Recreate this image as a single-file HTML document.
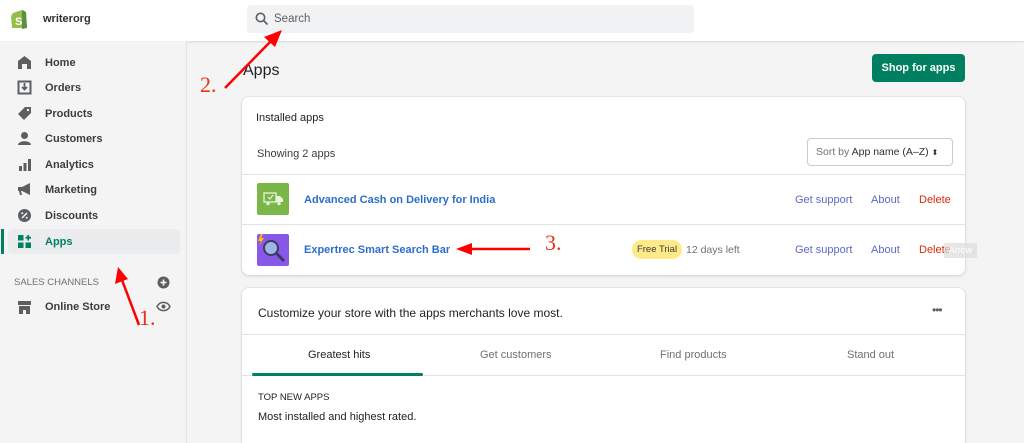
<!DOCTYPE html>
<html style="width:1024px;height:443px;overflow:hidden"><head><meta charset="utf-8"><style>
*{box-sizing:border-box;margin:0;padding:0}
body{width:1024px;height:443px;overflow:hidden;background:#f4f4f4;font-family:"Liberation Sans",sans-serif;color:#202223;position:relative;font-size:11px}
.a{position:absolute;white-space:nowrap}
.top{position:absolute;left:0;top:0;width:1024px;height:41px;background:#fff;box-shadow:0 1px 2px rgba(0,0,0,.12)}
.side{position:absolute;left:0;top:41px;width:187px;height:402px;background:#f4f4f4;border-right:1px solid #e1e3e5}
.nav{position:absolute;left:45px;font-size:11px;font-weight:bold;color:#3a3d40}
.ic{position:absolute;left:17px;width:15px;height:15px}
.card{position:absolute;left:242px;width:723px;background:#fff;border-radius:7px;box-shadow:0 0 0 1px rgba(63,63,68,.05),0 1px 3px rgba(63,63,68,.15)}
.lnk{color:#5c6ac4}
.red{color:#e8321b;font-family:"Liberation Serif",serif;font-size:22px}
</style></head><body>
<div class="top"></div>
<svg class="a" style="left:10px;top:8px" width="18" height="22" viewBox="0 0 18 22"><path d="M3 5 L12 2 L16 4 L17 20 L2 20 L1 8Z" fill="#95bf47"/><path d="M12 2 L16 4 L17 20 L12 21Z" fill="#5e8e3e"/><text x="5" y="17" font-size="11" font-weight="bold" fill="#fff" font-family="Liberation Sans">S</text></svg>
<div class="a" style="left:43px;top:13px;font-size:11px;font-weight:bold;color:#303030">writerorg</div>
<div class="a" style="left:247px;top:5px;width:447px;height:28px;background:#f1f2f3;border-radius:4px"></div>
<svg class="a" style="left:255px;top:12px" width="14" height="14" viewBox="0 0 14 14"><circle cx="5.5" cy="5.5" r="4.2" fill="none" stroke="#5c5f62" stroke-width="1.6"/><path d="M8.5 8.5 L12.5 12.5" stroke="#5c5f62" stroke-width="1.8"/></svg>
<div class="a" style="left:274px;top:13px;font-size:11.5px;color:#5c5f62">Search</div>

<div class="side"></div>
<div class="a" style="left:8px;top:229px;width:172px;height:25px;background:#ebecee;border-radius:4px"></div>
<div class="a" style="left:1px;top:229px;width:3px;height:25px;background:#008060"></div>
<svg class="ic" style="top:55px" viewBox="0 0 15 15"><path d="M1 6 L7.5 1 L14 6 V14 H10 V9 H5 V14 H1Z" fill="#5c5f62"/></svg>
<svg class="ic" style="top:80px" viewBox="0 0 15 15"><rect x="1.5" y="1.5" width="12" height="12" fill="none" stroke="#5c5f62" stroke-width="2"/><path d="M7.5 3 V9 M5 7 L7.5 9.5 L10 7" stroke="#5c5f62" stroke-width="1.8" fill="none"/></svg>
<svg class="ic" style="top:106px" viewBox="0 0 15 15"><path d="M8 1 H14 V7 L7 14 L1 8Z" fill="#5c5f62"/><circle cx="11" cy="4" r="1.2" fill="#f4f4f4"/></svg>
<svg class="ic" style="top:131px" viewBox="0 0 15 15"><circle cx="7.5" cy="4.5" r="3.5" fill="#5c5f62"/><path d="M1 14 C1 9 14 9 14 14Z" fill="#5c5f62"/></svg>
<svg class="ic" style="top:157px" viewBox="0 0 15 15"><rect x="2" y="9" width="3" height="5" fill="#5c5f62"/><rect x="6.5" y="6" width="3" height="8" fill="#5c5f62"/><rect x="11" y="2" width="3" height="12" fill="#5c5f62"/></svg>
<svg class="ic" style="top:182px" viewBox="0 0 15 15"><path d="M1 5 H5 L13 1 V13 L5 9 H4 L5 13 H3 L2 9 H1Z" fill="#5c5f62"/></svg>
<svg class="ic" style="top:208px" viewBox="0 0 15 15"><circle cx="7.5" cy="7.5" r="6.5" fill="#5c5f62"/><path d="M5 10 L10 5" stroke="#f4f4f4" stroke-width="1.5"/><circle cx="5.3" cy="5.3" r="1" fill="#f4f4f4"/><circle cx="9.7" cy="9.7" r="1" fill="#f4f4f4"/></svg>
<svg class="ic" style="top:234px" viewBox="0 0 15 15"><rect x="1" y="1" width="5.5" height="5.5" fill="#008060"/><rect x="1" y="8.5" width="5.5" height="5.5" fill="#008060"/><rect x="8.5" y="8.5" width="5.5" height="5.5" fill="#008060"/><path d="M11.2 1 V6.5 M8.5 3.7 H14" stroke="#008060" stroke-width="1.8"/></svg>
<svg class="ic" style="top:300px" viewBox="0 0 15 15"><rect x="1" y="1" width="13" height="4" fill="#5c5f62"/><path d="M2 6 V14 H6 V10 H9 V14 H13 V6Z" fill="#5c5f62"/></svg>
<div class="nav" style="top:57px">Home</div>
<div class="nav" style="top:82px">Orders</div>
<div class="nav" style="top:108px">Products</div>
<div class="nav" style="top:133px">Customers</div>
<div class="nav" style="top:159px">Analytics</div>
<div class="nav" style="top:184px">Marketing</div>
<div class="nav" style="top:210px">Discounts</div>
<div class="nav" style="top:236px;color:#008060">Apps</div>
<div class="a" style="left:14px;top:277px;font-size:9.5px;color:#6d7175">SALES CHANNELS</div>
<svg class="a" style="left:157px;top:276px" width="13" height="13" viewBox="0 0 13 13"><circle cx="6.5" cy="6.5" r="6" fill="#5c5f62"/><path d="M6.5 3.5 V9.5 M3.5 6.5 H9.5" stroke="#fff" stroke-width="1.6"/></svg>
<svg class="a" style="left:156px;top:301px" width="15" height="11" viewBox="0 0 15 11"><path d="M1 5.5 C4 0 11 0 14 5.5 C11 11 4 11 1 5.5Z" fill="none" stroke="#5c5f62" stroke-width="1.5"/><circle cx="7.5" cy="5.5" r="2" fill="#5c5f62"/></svg>
<div class="nav" style="top:301px">Online Store</div>

<div class="a" style="left:243px;top:62px;font-size:16px;color:#202223">Apps</div>
<div class="a" style="left:872px;top:54px;width:93px;height:28px;background:#008060;border-radius:4px;color:#fff;font-weight:bold;font-size:11px;line-height:28px;text-align:center">Shop for apps</div>

<div class="card" style="top:97px;height:178px">
<div class="a" style="left:14px;top:15px;font-size:11px;color:#202223">Installed apps</div>
<div class="a" style="left:15px;top:51px;font-size:11px;color:#3a3d40">Showing 2 apps</div>
<div class="a" style="left:565px;top:41px;width:146px;height:28px;border:1px solid #c9cccf;border-radius:4px;font-size:10.5px;line-height:26px;padding-left:8px;color:#303030"><span style="color:#6d7175">Sort by</span> App name (A–Z) <span style="font-size:8px">⬍</span></div>
<div class="a" style="left:0;top:77px;width:723px;border-top:1px solid #e1e3e5"></div>
<div class="a" style="left:0;top:127px;width:723px;border-top:1px solid #e1e3e5"></div>
<div class="a" style="left:15px;top:86px;width:32px;height:32px;background:#7ab648;border-radius:2px"></div>
<svg class="a" style="left:19px;top:94px" width="24" height="16" viewBox="0 0 24 16"><rect x="3" y="2" width="12" height="9" fill="none" stroke="#e8f3df" stroke-width="1.3"/><path d="M15 5 H19 L22 8 V11 H15Z" fill="#e8f3df"/><circle cx="7" cy="12.5" r="1.7" fill="#e8f3df"/><circle cx="18" cy="12.5" r="1.7" fill="#e8f3df"/><path d="M7 6 L9 8 L12 4" stroke="#e8f3df" fill="none" stroke-width="1.2"/></svg>
<div class="a" style="left:62px;top:97px;font-weight:bold;font-size:11px;color:#2c6ecb">Advanced Cash on Delivery for India</div>
<div class="a lnk" style="left:553px;top:97px">Get support</div>
<div class="a lnk" style="left:629px;top:97px">About</div>
<div class="a" style="left:677px;top:97px;color:#d82c0d">Delete</div>
<div class="a" style="left:15px;top:137px;width:32px;height:32px;background:#8a58e8;border-radius:2px"></div>
<svg class="a" style="left:15px;top:137px" width="32" height="32" viewBox="0 0 32 32"><path d="M4 0 L1 7 H4 L2 12 L7 4 H4 L6 0Z" fill="#ffc400"/><circle cx="14" cy="14" r="7" fill="#9fb5e6" stroke="#3a3a6a" stroke-width="2"/><path d="M19 19 L27 27" stroke="#3a3a6a" stroke-width="3"/></svg>
<div class="a" style="left:62px;top:147px;font-weight:bold;font-size:11px;color:#2c6ecb">Expertrec Smart Search Bar</div>
<div class="a" style="left:390px;top:143px;width:50px;height:19px;background:#ffea8a;border-radius:10px;font-size:9.5px;line-height:19px;text-align:center;color:#3a3a3a">Free Trial</div>
<div class="a" style="left:444px;top:147px;color:#6d7175;font-size:10.5px">12 days left</div>
<div class="a lnk" style="left:553px;top:147px">Get support</div>
<div class="a lnk" style="left:629px;top:147px">About</div>
<div class="a" style="left:677px;top:147px;color:#d82c0d">Delete</div>
</div>
<div class="a" style="left:944px;top:243px;width:33px;height:15px;background:rgba(220,220,220,.7);color:#fff;font-size:9px;line-height:15px;text-align:center">Arrow</div>

<div class="card" style="top:288px;height:160px">
<div class="a" style="left:16px;top:18px;font-size:12px;color:#202223">Customize your store with the apps merchants love most.</div>
<div class="a" style="left:690px;top:15px;font-size:12px;color:#5c5f62;letter-spacing:-1px">•••</div>
<div class="a" style="left:0;top:46px;width:723px;border-top:1px solid #e1e3e5"></div>
<div class="a" style="left:66px;top:61px;font-size:11px;color:#202223">Greatest hits</div>
<div class="a" style="left:238px;top:61px;font-size:11px;color:#6d7175">Get customers</div>
<div class="a" style="left:418px;top:61px;font-size:11px;color:#6d7175">Find products</div>
<div class="a" style="left:605px;top:61px;font-size:11px;color:#6d7175">Stand out</div>
<div class="a" style="left:0;top:87px;width:723px;border-top:1px solid #e1e3e5"></div>
<div class="a" style="left:10px;top:85px;width:171px;height:3px;background:#008060;border-radius:2px"></div>
<div class="a" style="left:16px;top:104px;font-size:9.5px;color:#202223">TOP NEW APPS</div>
<div class="a" style="left:16px;top:123px;font-size:11px;color:#202223">Most installed and highest rated.</div>
</div>

<svg class="a" style="left:0;top:0" width="1024" height="443">
<g stroke="#f00" stroke-width="2.5" fill="#f00">
<line x1="225" y1="88" x2="272" y2="40"/><path d="M282 30 L264 37 L275 47Z" stroke="none"/>
<line x1="139" y1="325" x2="122" y2="280"/><path d="M118 267 L115 284 L128 279Z" stroke="none"/>
<line x1="530" y1="249" x2="470" y2="249"/><path d="M456 249 L472 243 L472 255Z" stroke="none"/>
</g></svg>
<div class="a red" style="left:200px;top:72px">2.</div>
<div class="a red" style="left:139px;top:305px">1.</div>
<div class="a red" style="left:545px;top:230px">3.</div>
</body></html>
